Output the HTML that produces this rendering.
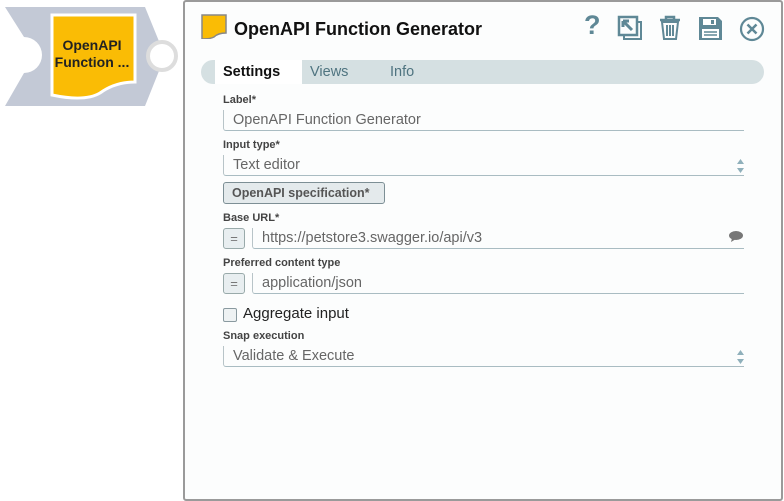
<!DOCTYPE html>
<html><head><style>
body{margin:0;width:784px;height:501px;background:#fff;position:relative;overflow:hidden;font-family:"Liberation Sans",sans-serif}
.a{position:absolute}
.lbl{position:absolute;left:223px;font-size:11px;font-weight:bold;color:#444}
.fld{position:absolute;left:223px;width:521px;height:21px;border-left:1px solid #b8c4c8;border-bottom:1px solid #a9bcc2;border-radius:0 0 0 3px;font-size:14.5px;color:#666;box-sizing:border-box;padding:2px 0 0 9px}
.eq{position:absolute;left:223px;width:22px;height:21px;border:1px solid #9aa;border-radius:3px;background:#e8eef0;box-sizing:border-box;color:#777;text-align:center;font-size:13px;line-height:19px}
.sp{position:absolute;right:40px;width:9px;height:16px}
</style></head><body>
<svg class="a" style="left:0;top:0" width="185" height="110">
<path d="M5 7 L145 7 L165 56 L145 106 L5 106 L24 73 A18 18 0 0 0 24 37 Z" fill="#c3c9d6"/>
<circle cx="162" cy="56" r="14" fill="#fff" stroke="#ddd" stroke-width="4"/>
<path d="M52 15 L135 15 L135 82 Q115 82 100 93 Q85 102 52 95 Z" fill="#fabc05" stroke="#fff" stroke-width="3"/>
<text x="92" y="50" font-size="14" font-weight="bold" text-anchor="middle" fill="#222" font-family="Liberation Sans">OpenAPI</text>
<text x="92" y="67" font-size="14" font-weight="bold" text-anchor="middle" fill="#222" font-family="Liberation Sans">Function ...</text>
</svg>
<div class="a" style="left:183px;top:0;width:596px;height:497px;border:2px solid #9a9a9a;background:#fcfdfd;border-radius:3px"></div>
<svg class="a" style="left:200px;top:13px" width="28" height="26"><path d="M2 2 H26 V20 Q18 20 14 24 Q10 26 2 26 Z" fill="#fabc05" stroke="#888" stroke-width="1.5"/></svg>
<div class="a" style="left:234px;top:19px;font-size:18px;font-weight:bold;color:#111">OpenAPI Function Generator</div>
<div class="a" style="left:584px;top:10px;font-size:27px;font-weight:bold;color:#5f8896">?</div>
<svg class="a" style="left:617px;top:15px" width="26" height="26"><rect x="2" y="2" width="18" height="18" fill="none" stroke="#5f8896" stroke-width="2.5"/><path d="M20 7 H24 V24 H7 V20" fill="none" stroke="#5f8896" stroke-width="2"/><path d="M6 6 L15 15 M6 6 H12 M6 6 V12" stroke="#5f8896" stroke-width="3" fill="none"/></svg>
<svg class="a" style="left:658px;top:15px" width="24" height="26"><path d="M2 5 H22 M8 5 V2 H16 V5" stroke="#5f8896" stroke-width="2.5" fill="none"/><path d="M4 7 L6 24 H18 L20 7 Z M9 10 V21 M12 10 V21 M15 10 V21" stroke="#5f8896" stroke-width="2" fill="none"/></svg>
<svg class="a" style="left:698px;top:16px" width="26" height="25"><path d="M1 1 H20 L24 5 V24 H1 Z" fill="#5f8896"/><rect x="5" y="3" width="13" height="6" fill="#fff"/><rect x="13" y="4" width="3" height="4" fill="#5f8896"/><rect x="4" y="13" width="17" height="9" fill="#fff"/><path d="M6 16 H19 M6 19 H19" stroke="#5f8896" stroke-width="1.5"/></svg>
<svg class="a" style="left:739px;top:16px" width="26" height="26"><circle cx="13" cy="13" r="11" fill="none" stroke="#5f8896" stroke-width="2.2"/><path d="M8.5 8.5 L17.5 17.5 M17.5 8.5 L8.5 17.5" stroke="#5f8896" stroke-width="2.5"/></svg>
<div class="a" style="left:201px;top:60px;width:563px;height:24px;background:#d5e0e2;border-radius:12px"></div>
<div class="a" style="left:215px;top:60px;width:87px;height:24px;background:#fff"></div>
<div class="a" style="left:223px;top:64px;font-size:14.5px;font-weight:bold;color:#111">Settings</div>
<div class="a" style="left:310px;top:64px;font-size:14.5px;color:#4f7480">Views</div>
<div class="a" style="left:390px;top:64px;font-size:14.5px;color:#4f7480">Info</div>
<div class="lbl" style="top:94px">Label*</div>
<div class="fld" style="top:110px">OpenAPI Function Generator</div>
<div class="lbl" style="top:139px">Input type*</div>
<div class="fld" style="top:155px">Text editor</div>
<svg class="sp" style="left:736px;top:158px"><path d="M1 6 L4.5 1 L8 6Z M1 10 L4.5 15 L8 10Z" fill="#8fb0bb"/></svg>
<div class="a" style="left:223px;top:182px;width:162px;height:22px;border:1px solid #7d8f95;border-radius:3px;background:#e4eaec;box-sizing:border-box;font-size:12.5px;font-weight:bold;color:#555;padding:3px 0 0 8px">OpenAPI specification*</div>
<div class="lbl" style="top:212px">Base URL*</div>
<div class="eq" style="top:228px">=</div>
<div class="fld" style="top:228px;left:252px;width:492px">https://petstore3.swagger.io/api/v3</div>
<svg class="a" style="left:728px;top:230px" width="16" height="13"><ellipse cx="8" cy="5.5" rx="7" ry="4.5" fill="#777"/><path d="M4 8 L3 12 L8 9Z" fill="#777"/></svg>
<div class="lbl" style="top:257px">Preferred content type</div>
<div class="eq" style="top:273px">=</div>
<div class="fld" style="top:273px;left:252px;width:492px">application/json</div>
<div class="a" style="left:223px;top:308px;width:12px;height:12px;border:1px solid #8a9aa0;border-radius:2px;background:#eef2f3"></div>
<div class="a" style="left:243px;top:305px;font-size:15px;color:#222">Aggregate input</div>
<div class="lbl" style="top:330px">Snap execution</div>
<div class="fld" style="top:346px">Validate &amp; Execute</div>
<svg class="sp" style="left:736px;top:349px"><path d="M1 6 L4.5 1 L8 6Z M1 10 L4.5 15 L8 10Z" fill="#8fb0bb"/></svg>
</body></html>
